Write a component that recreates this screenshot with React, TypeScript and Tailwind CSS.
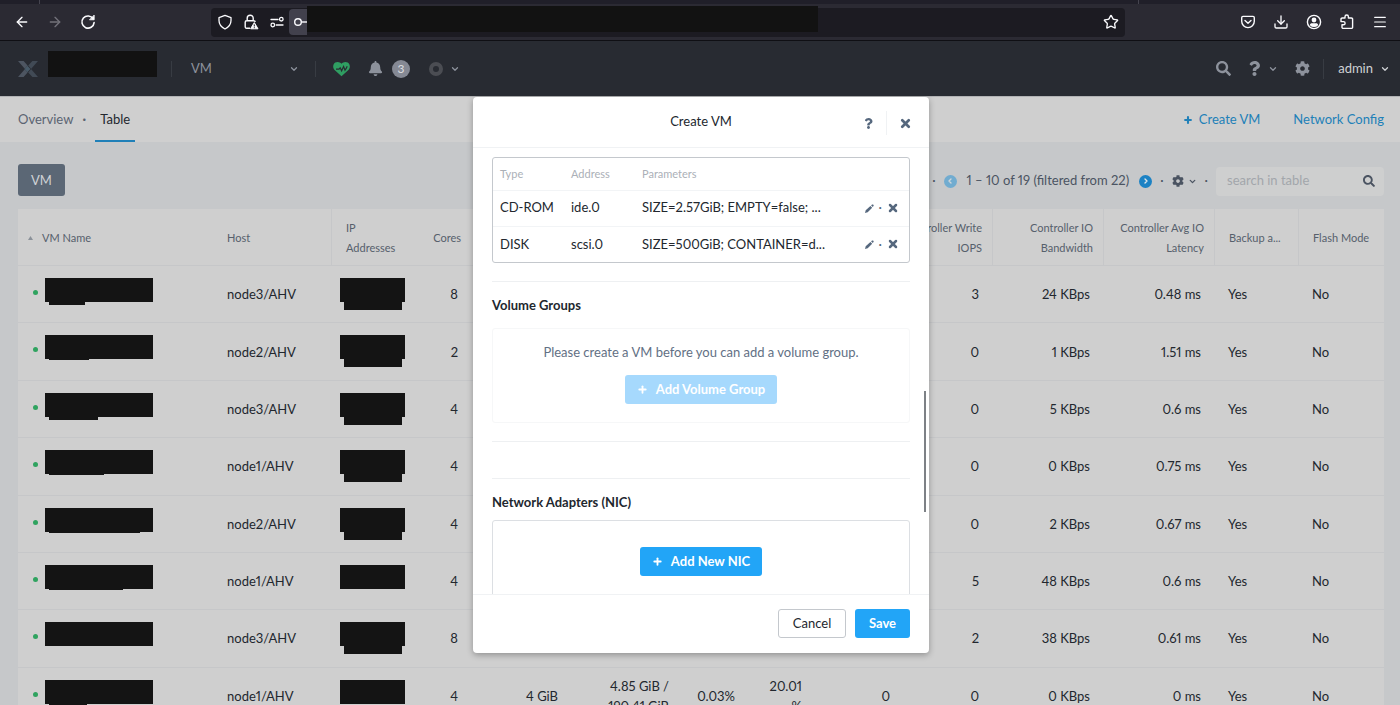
import type { ReactNode } from "react";
import {
  ArrowLeft,
  ArrowRight,
  ChevronDown,
  ChevronLeft,
  ChevronRight,
  Download,
  Menu,
  Plus,
  Star,
  X,
} from "lucide-react";
import { FaBell, FaCog, FaQuestion, FaSearch } from "react-icons/fa";

type VmRow = {
  host: string;
  cores: number;
  nameTail: string;
  ipTail: boolean;
  memory?: string;
  storage?: string[];
  cpuUsage?: string;
  memoryUsage?: string[];
  readIops?: string;
  writeIops: number;
  bandwidth: string;
  latency: string;
};

const vms: VmRow[] = [
  { host: "node3/AHV", cores: 8, nameTail: "w-9 h-[3px]", ipTail: true, writeIops: 3, bandwidth: "24 KBps", latency: "0.48 ms" },
  { host: "node2/AHV", cores: 2, nameTail: "w-10 h-px", ipTail: true, writeIops: 0, bandwidth: "1 KBps", latency: "1.51 ms" },
  { host: "node3/AHV", cores: 4, nameTail: "w-[49px] h-[3px]", ipTail: true, writeIops: 0, bandwidth: "5 KBps", latency: "0.6 ms" },
  { host: "node1/AHV", cores: 4, nameTail: "w-[55px] h-px", ipTail: true, writeIops: 0, bandwidth: "0 KBps", latency: "0.75 ms" },
  { host: "node2/AHV", cores: 4, nameTail: "w-[91px] h-px", ipTail: true, writeIops: 0, bandwidth: "2 KBps", latency: "0.67 ms" },
  { host: "node1/AHV", cores: 4, nameTail: "w-[74px] h-px", ipTail: false, writeIops: 5, bandwidth: "48 KBps", latency: "0.6 ms" },
  {
    host: "node3/AHV",
    cores: 8,
    nameTail: "hidden",
    ipTail: true,
    storage: ["", "288.8 GiB"],
    writeIops: 2,
    bandwidth: "38 KBps",
    latency: "0.61 ms",
  },
  {
    host: "node1/AHV",
    cores: 4,
    nameTail: "w-[38px] h-px",
    ipTail: false,
    memory: "4 GiB",
    storage: ["4.85 GiB /", "190.41 GiB"],
    cpuUsage: "0.03%",
    memoryUsage: ["20.01", "%"],
    readIops: "0",
    writeIops: 0,
    bandwidth: "0 KBps",
    latency: "0 ms",
  },
];

const disks = [
  { type: "CD-ROM", address: "ide.0", parameters: "SIZE=2.57GiB; EMPTY=false; ..." },
  { type: "DISK", address: "scsi.0", parameters: "SIZE=500GiB; CONTAINER=d..." },
];

function BrowserBar() {
  return (
    <div className="shrink-0 border-b border-[#0f0f14] bg-[#2b2a33] text-[#fbfbfe]">
      <div className="flex h-1 bg-[#201f29]">
        <span className="ml-[39px] w-px bg-[#45444f]" />
        <span className="mr-[261px] ml-auto w-px bg-[#45444f]" />
      </div>
      <div className="flex h-9 items-center">
        <div className="flex w-[211px] items-center gap-[17px] pl-3.5">
          <button aria-label="Back"><ArrowLeft size={16} /></button>
          <button aria-label="Forward" className="text-[#73727a]"><ArrowRight size={16} /></button>
          <button aria-label="Reload">
            <svg width="16" height="16" viewBox="0 0 16 16" fill="none" stroke="currentColor" strokeWidth="1.6" strokeLinecap="round">
              <path d="M13.2 4.8A6.1 6.1 0 1 0 14.1 8.6" />
              <path d="M14.2 1.4v4.4H9.8z" fill="currentColor" strokeWidth="0.8" strokeLinejoin="round" />
            </svg>
          </button>
        </div>
        <div className="mr-[115px] flex h-[29px] flex-1 items-center rounded bg-[#1c1b22]">
          <div className="flex items-center gap-2.5 pl-1.5">
            <svg width="16" height="16" viewBox="0 0 16 16" fill="none" stroke="currentColor" strokeWidth="1.3" strokeLinejoin="round">
              <path d="M8 1.4 14 3.6V6.5C14 10.5 12 13 8 15 4 13 2 10.5 2 6.5V3.6z" />
            </svg>
            <svg width="16" height="16" viewBox="0 0 16 16" fill="none" stroke="currentColor" strokeWidth="1.4">
              <path d="M7 14.3H3.6A1.4 1.4 0 0 1 2.2 13V8.2a1.4 1.4 0 0 1 1.4-1.4h7.2A1.4 1.4 0 0 1 12.2 8M4.2 6.6V4.2a3 3 0 0 1 6 0v2.4" />
              <path d="M11.3 8.6 15 14.8H7.6z" fill="currentColor" strokeLinejoin="round" strokeWidth="1" />
              <path d="M11.3 10.4v2.1M11.3 13.2v1" stroke="#1c1b22" strokeWidth="1" />
            </svg>
            <svg width="16" height="16" viewBox="0 0 16 16" fill="none" stroke="currentColor" strokeWidth="1.3" strokeLinecap="round">
              <path d="M2 5.5h7M7.2 11h6.8" />
              <circle cx="12.3" cy="5.2" r="1.8" />
              <circle cx="3.8" cy="11" r="1.8" />
            </svg>
          </div>
          <div className="ml-1 flex h-[26px] w-[18px] items-center justify-end rounded-l bg-[#42414d]">
            <svg width="14" height="14" viewBox="0 0 14 14" fill="none" stroke="currentColor" strokeWidth="1.4">
              <circle cx="5" cy="7" r="3.3" />
              <path d="M8.4 7H14" />
            </svg>
          </div>
          <div className="-mt-0.5 h-[26px] w-[511px] self-start bg-[#121212]" />
          <button aria-label="Bookmark" className="mr-1.5 ml-auto"><Star size={16} strokeWidth={2} /></button>
        </div>
        <div className="flex items-center gap-[17px] pr-3">
          <svg width="16" height="16" viewBox="0 0 16 16" fill="none" stroke="currentColor" strokeWidth="1.4" strokeLinecap="round" strokeLinejoin="round">
            <path d="M3 2.4h10a1.3 1.3 0 0 1 1.3 1.3v3.6a6.3 6.3 0 0 1-12.6 0V3.7A1.3 1.3 0 0 1 3 2.4z" />
            <path d="M5 6.4 8 9.2l3-2.8" />
          </svg>
          <Download size={16} strokeWidth={2} />
          <svg width="16" height="16" viewBox="0 0 16 16" fill="none" stroke="currentColor" strokeWidth="1.4">
            <circle cx="8" cy="8" r="6.6" />
            <circle cx="8" cy="6" r="2.4" fill="currentColor" stroke="none" />
            <path d="M3.9 11.2c0-1.4 1-2 2.1-2h4c1.1 0 2.1.6 2.1 2A5.4 5.4 0 0 1 3.9 11.2z" fill="currentColor" stroke="none" />
          </svg>
          <svg width="16" height="16" viewBox="0 0 16 16" fill="none" stroke="currentColor" strokeWidth="1.4" strokeLinejoin="round">
            <path d="M6 4V2.7a1.7 1.7 0 0 1 3.4 0V4h3a1.2 1.2 0 0 1 1.2 1.2v8a1.2 1.2 0 0 1-1.2 1.2H4.2A1.2 1.2 0 0 1 3 13.200v-2.400h1.500a1.600 1.600 0 0 0 0-3.200H2V5.200A1.200 1.200 0 0 1 3.200 4z" />
          </svg>
          <button aria-label="Menu"><Menu size={16} strokeWidth={1.8} /></button>
        </div>
      </div>
    </div>
  );
}

function AppHeader() {
  return (
    <header className="flex h-[55px] shrink-0 items-center bg-[#282b32] pr-2.5 pl-[18px] text-[#8d929c]">
      <svg width="20" height="16" viewBox="0 0 20 16">
        <path d="M0 0h5.600L9.600 4.400 6.600 8 9.600 11.600 5.600 16H0L7 8z" fill="#4d5561" />
        <path d="M14.400 0H20L13 8l7 8h-5.600L10.200 11.400l3-3.400-3-3.400z" fill="#414a55" />
        <path d="M9.400 4.800 12.400 8l-3 3.200L6.600 8z" fill="#485a68" />
      </svg>
      <div className="mb-2.5 ml-2.5 h-[26px] w-[109px] bg-[#121212]" />
      <span className="ml-3.5 h-4 w-px bg-[#383c43]" />
      <button className="ml-[19px] flex w-[108px] items-center justify-between text-[13px]">
        VM
        <ChevronDown size={10} strokeWidth={3} />
      </button>
      <span className="ml-4 h-4 w-px bg-[#383c43]" />
      <svg className="ml-[17px]" width="17" height="16" viewBox="0 0 17 16">
        <path d="M8.500 15.200 1.600 9C-.6 6.700-.1 3 2.200 1.600 4.400.3 7 .9 8.500 2.800 10 .9 12.600.3 14.800 1.600c2.300 1.400 2.800 5.100.6 7.400z" fill="#2f9e62" />
        <path d="M3 8.200h3l1.200-1.400 1.400 3 2-4.200 1.400 3.600 1.200-1.800 1-2.200" fill="none" stroke="#282b32" strokeWidth="1.200" />
      </svg>
      <FaBell className="ml-[18px]" size={15} />
      <span className="ml-[9px] flex size-[18px] items-center justify-center rounded-full bg-[#858994] text-xs text-[#dcdde0]">3</span>
      <span className="ml-[19px] size-[14px] rounded-full border-4 border-[#4b4d53]" />
      <ChevronDown className="ml-[7px]" size={10} strokeWidth={3} />

      <div className="ml-auto flex items-center">
        <button aria-label="Search"><FaSearch size={15} /></button>
        <button aria-label="Help" className="ml-4 flex items-center gap-1.5">
          <FaQuestion size={15} />
          <ChevronDown size={10} strokeWidth={3} />
        </button>
        <button aria-label="Settings" className="ml-[17px]"><FaCog size={15} /></button>
        <span className="ml-[13px] h-5 w-px bg-[#383c43]" />
        <button className="ml-3.5 flex items-center gap-[7px] text-[13px] text-[#cfd1d4]">
          admin
          <ChevronDown size={10} strokeWidth={3} />
        </button>
      </div>
    </header>
  );
}

function SubNav() {
  return (
    <nav className="flex h-[46px] items-center justify-between border-t border-[#b2b3b5] bg-[#cfcfcf] pr-4 pl-[18px] text-[13px]">
      <div className="flex h-full items-center">
        <a href="#overview" className="text-[#5b6472]">Overview</a>
        <span className="mx-2 w-1.5 text-center font-bold text-[#5b6472]">·</span>
        <a href="#table" className="flex h-full items-center border-y-2 border-t-transparent border-b-[#2080b8] px-[5px] text-[#22272e]">Table</a>
      </div>
      <div className="flex items-center gap-[33px] text-[#2180b8]">
        <a href="#create" className="flex items-center gap-1.5"><Plus size={10} strokeWidth={5} />Create VM</a>
        <a href="#network">Network Config</a>
      </div>
    </nav>
  );
}

function Toolbar() {
  return (
    <div className="flex items-center pt-[22px] pb-[13px] text-[13px] text-[#4b5462]">
      <button className="h-8 w-[47px] rounded-[3px] bg-[#5b6775] pt-0.5 text-[#cfd2d5]">VM</button>
      <div className="ml-auto flex items-center pt-0.5">
        <span className="mr-2">·</span>
        <button aria-label="Previous page" className="flex size-[13px] items-center justify-center rounded-full bg-[#71acd0] text-[#cfd6da]">
          <ChevronLeft size={8} strokeWidth={4} />
        </button>
        <span className="mx-2.5">1 – 10 of 19 (filtered from 22)</span>
        <button aria-label="Next page" className="flex size-[13px] items-center justify-center rounded-full bg-[#1c82c4] text-[#dfe6ea]">
          <ChevronRight size={8} strokeWidth={4} />
        </button>
        <span className="mx-2">·</span>
        <button aria-label="Table settings" className="flex items-center gap-1">
          <FaCog size={12} />
          <ChevronDown size={9} strokeWidth={3.5} />
        </button>
        <span className="mx-2">·</span>
        <label className="flex h-[29px] w-[168px] items-center rounded-sm bg-[#cecfcf] px-[9px]">
          <input
            type="text"
            aria-label="search in table"
            placeholder="search in table"
            className="w-full min-w-0 bg-transparent px-0.5 placeholder:text-[#a2a6ab] focus:outline-none"
          />
          <FaSearch size={12} className="shrink-0" />
        </label>
      </div>
    </div>
  );
}

type HeadProps = { children?: ReactNode; right?: boolean; line?: boolean };

function Head({ children, right, line }: HeadProps) {
  return (
    <th
      className={
        "border-b border-[#c6c7c9] pt-0.5 font-normal whitespace-nowrap " +
        (right ? "pr-2.5 text-right " : "pl-3.5 text-left ") +
        (line ? "border-l" : "")
      }
    >
      {children}
    </th>
  );
}

function NumberCell({ children }: { children?: ReactNode }) {
  return <td className="pr-[13px] text-right">{children}</td>;
}

function VmTable() {
  return (
    <table className="h-[516px] w-full table-fixed border-separate border-spacing-0 bg-[#cfcfcf] text-[13px] leading-5 text-[#22272e]">
      <colgroup>
        <col className="w-[195px]" />
        <col className="w-[118px]" />
        <col className="w-[86px]" />
        <col className="w-[54px]" />
        <col className="w-[100px]" />
        <col className="w-[111px]" />
        <col className="w-[66px]" />
        <col className="w-[67px]" />
        <col className="w-[88px]" />
        <col className="w-[89px]" />
        <col className="w-[111px]" />
        <col className="w-[111px]" />
        <col className="w-[84px]" />
        <col className="w-[86px]" />
      </colgroup>
      <thead className="text-[11px] text-[#56606c]">
        <tr className="h-[57px]">
          <th className="border-b border-[#c6c7c9] pt-0.5 text-left font-normal">
            <span className="flex items-center pl-2.5">
              <svg width="5" height="4" viewBox="0 0 5 4" className="mr-[9px]">
                <path d="M2.500 0 5 4H0z" fill="#8b9199" />
              </svg>
              VM Name
            </span>
          </th>
          <Head>Host</Head>
          <Head line>IP<br />Addresses</Head>
          <Head right>Cores</Head>
          <Head />
          <Head />
          <Head />
          <Head />
          <Head />
          <Head right>Controller Write<br />IOPS</Head>
          <Head right line>Controller IO<br />Bandwidth</Head>
          <Head right line>Controller Avg IO<br />Latency</Head>
          <Head line>Backup a...</Head>
          <Head line>Flash Mode</Head>
        </tr>
      </thead>
      <tbody className="[&_td]:border-b [&_td]:border-[#c6c7c9]">
        {vms.map((vm, index) => (
          <tr key={index} className="h-[57px]">
            <td className="pt-3 align-top">
              <div className="flex">
                <span className="mt-3 mr-[7px] ml-[15px] size-[5px] rounded-full bg-[#2fa35f]" />
                <div>
                  <div className="h-6 w-[108px] bg-[#141414]" />
                  <div className={"ml-1 bg-[#141414] " + vm.nameTail} />
                </div>
              </div>
            </td>
            <td className="pl-3.5">{vm.host}</td>
            <td className="pt-3 pl-[9px] align-top">
              <div className="h-6 w-[65px] bg-[#141414]" />
              {vm.ipTail && <div className="ml-1 h-2 w-[58px] bg-[#141414]" />}
            </td>
            <NumberCell>{vm.cores}</NumberCell>
            <NumberCell>{vm.memory}</NumberCell>
            <NumberCell>{vm.storage && <>{vm.storage[0]}<br />{vm.storage[1]}</>}</NumberCell>
            <NumberCell>{vm.cpuUsage}</NumberCell>
            <NumberCell>{vm.memoryUsage && <>{vm.memoryUsage[0]}<br />{vm.memoryUsage[1]}</>}</NumberCell>
            <NumberCell>{vm.readIops}</NumberCell>
            <NumberCell>{vm.writeIops}</NumberCell>
            <NumberCell>{vm.bandwidth}</NumberCell>
            <NumberCell>{vm.latency}</NumberCell>
            <td className="pl-3.5">Yes</td>
            <td className="pl-3.5">No</td>
          </tr>
        ))}
      </tbody>
    </table>
  );
}

function DiskTable() {
  return (
    <div className="rounded-[3px] border border-[#c4c8cd]">
      <table className="w-full table-fixed text-left text-[13px] text-[#22272e]">
        <colgroup>
          <col className="w-[71px]" />
          <col className="w-[71px]" />
          <col />
          <col className="w-[56px]" />
        </colgroup>
        <thead className="text-[11px] text-[#abb0b7]">
          <tr className="h-8 border-b border-[#f2f4f6]">
            <th className="pl-[7px] font-normal">Type</th>
            <th className="pl-[7px] font-normal">Address</th>
            <th className="pl-[7px] font-normal">Parameters</th>
            <td />
          </tr>
        </thead>
        <tbody>
          {disks.map((disk) => (
            <tr key={disk.type} className="h-9 border-b border-[#f2f4f6] last:border-none">
              <td className="pl-[7px]">{disk.type}</td>
              <td className="pl-[7px]">{disk.address}</td>
              <td className="pl-[7px]">{disk.parameters}</td>
              <td>
                <div className="flex items-center justify-end gap-[5px] pr-2.5 text-[#56687e]">
                  <button aria-label={"Edit " + disk.type}>
                    <svg width="9" height="9" viewBox="0 0 9 9" fill="currentColor">
                      <path d="M0 9 .7 6.200 5.400 2 7.200 3.800 2.700 8.200zM6.100 1.400 7 .6c.4-.3.8-.3 1.100 0l.4.4c.3.3.3.800 0 1.100l-.7.900z" />
                    </svg>
                  </button>
                  <span>·</span>
                  <button aria-label={"Delete " + disk.type}><X size={12} strokeWidth={5} /></button>
                </div>
              </td>
            </tr>
          ))}
        </tbody>
      </table>
    </div>
  );
}

function CreateVmDialog() {
  return (
    <div
      role="dialog"
      aria-label="Create VM"
      className="relative flex h-full w-[456px] flex-col overflow-hidden rounded bg-white text-[13px] text-[#22272e] shadow-[0_2px_6px_rgba(0,0,0,0.3)]"
    >
      <div className="grid h-[51px] shrink-0 grid-cols-[1fr_auto_1fr] items-center border-b border-[#f0f2f4]">
        <span />
        <h2>Create VM</h2>
        <div className="flex items-center justify-end pt-0.5 pr-[17px] text-[#56687e]">
          <button aria-label="Help"><FaQuestion size={11} /></button>
          <span className="mr-3 ml-3 h-6 w-px bg-[#f0f2f4]" />
          <button aria-label="Close"><X size={13} strokeWidth={5} /></button>
        </div>
      </div>

      <div className="min-h-0 flex-1 overflow-hidden px-[19px] pt-[9px]">
        <DiskTable />

        <section className="mt-[18px] border-y border-[#eef0f2] pb-[18px]">
          <h3 className="py-[13px] leading-5 font-bold">Volume Groups</h3>
          <div className="flex flex-col items-center rounded-[3px] border border-[#f6f7f8] pt-[13px] pb-[18px]">
            <p className="leading-5 text-[#627084]">Please create a VM before you can add a volume group.</p>
            <button disabled className="mt-[13px] flex h-[29px] items-center gap-2 rounded-[3px] bg-[#a6d9fd] px-3 font-bold text-white">
              <Plus size={11} strokeWidth={4} />
              Add Volume Group
            </button>
          </div>
        </section>

        <section className="mt-9 border-t border-[#eef0f2]">
          <h3 className="pt-[13px] pb-2 leading-5 font-bold">Network Adapters (NIC)</h3>
          <div className="flex justify-center rounded-[3px] border border-[#dcdfe3] py-[26px]">
            <button className="flex h-[29px] items-center gap-2 rounded-[3px] bg-[#22a5f7] px-3 font-bold text-white">
              <Plus size={11} strokeWidth={4} />
              Add New NIC
            </button>
          </div>
        </section>
      </div>

      <div className="flex h-[59px] shrink-0 justify-end gap-[9px] border-t border-[#f0f2f4] pt-3.5 pr-[19px]">
        <button className="h-[29px] w-[68px] rounded-[3px] border border-[#c4c8cd]">Cancel</button>
        <button className="h-[29px] w-[55px] rounded-[3px] bg-[#22a5f7] font-bold text-white">Save</button>
      </div>

      <span className="absolute top-[294px] right-[3px] h-[121px] w-0.5 bg-[#7d8186]" />
    </div>
  );
}

export default function App() {
  return (
    <div className="flex h-screen flex-col overflow-hidden bg-[#c6c8ca] font-['Lato','Liberation_Sans',sans-serif] proportional-nums">
      <BrowserBar />
      <AppHeader />
      <main className="relative min-h-0 flex-1 overflow-hidden">
        <SubNav />
        <div className="pr-4 pl-[18px]">
          <Toolbar />
          <VmTable />
        </div>
        <div className="absolute inset-0 flex justify-center pt-px pb-13 pl-0.5">
          <CreateVmDialog />
        </div>
      </main>
    </div>
  );
}
